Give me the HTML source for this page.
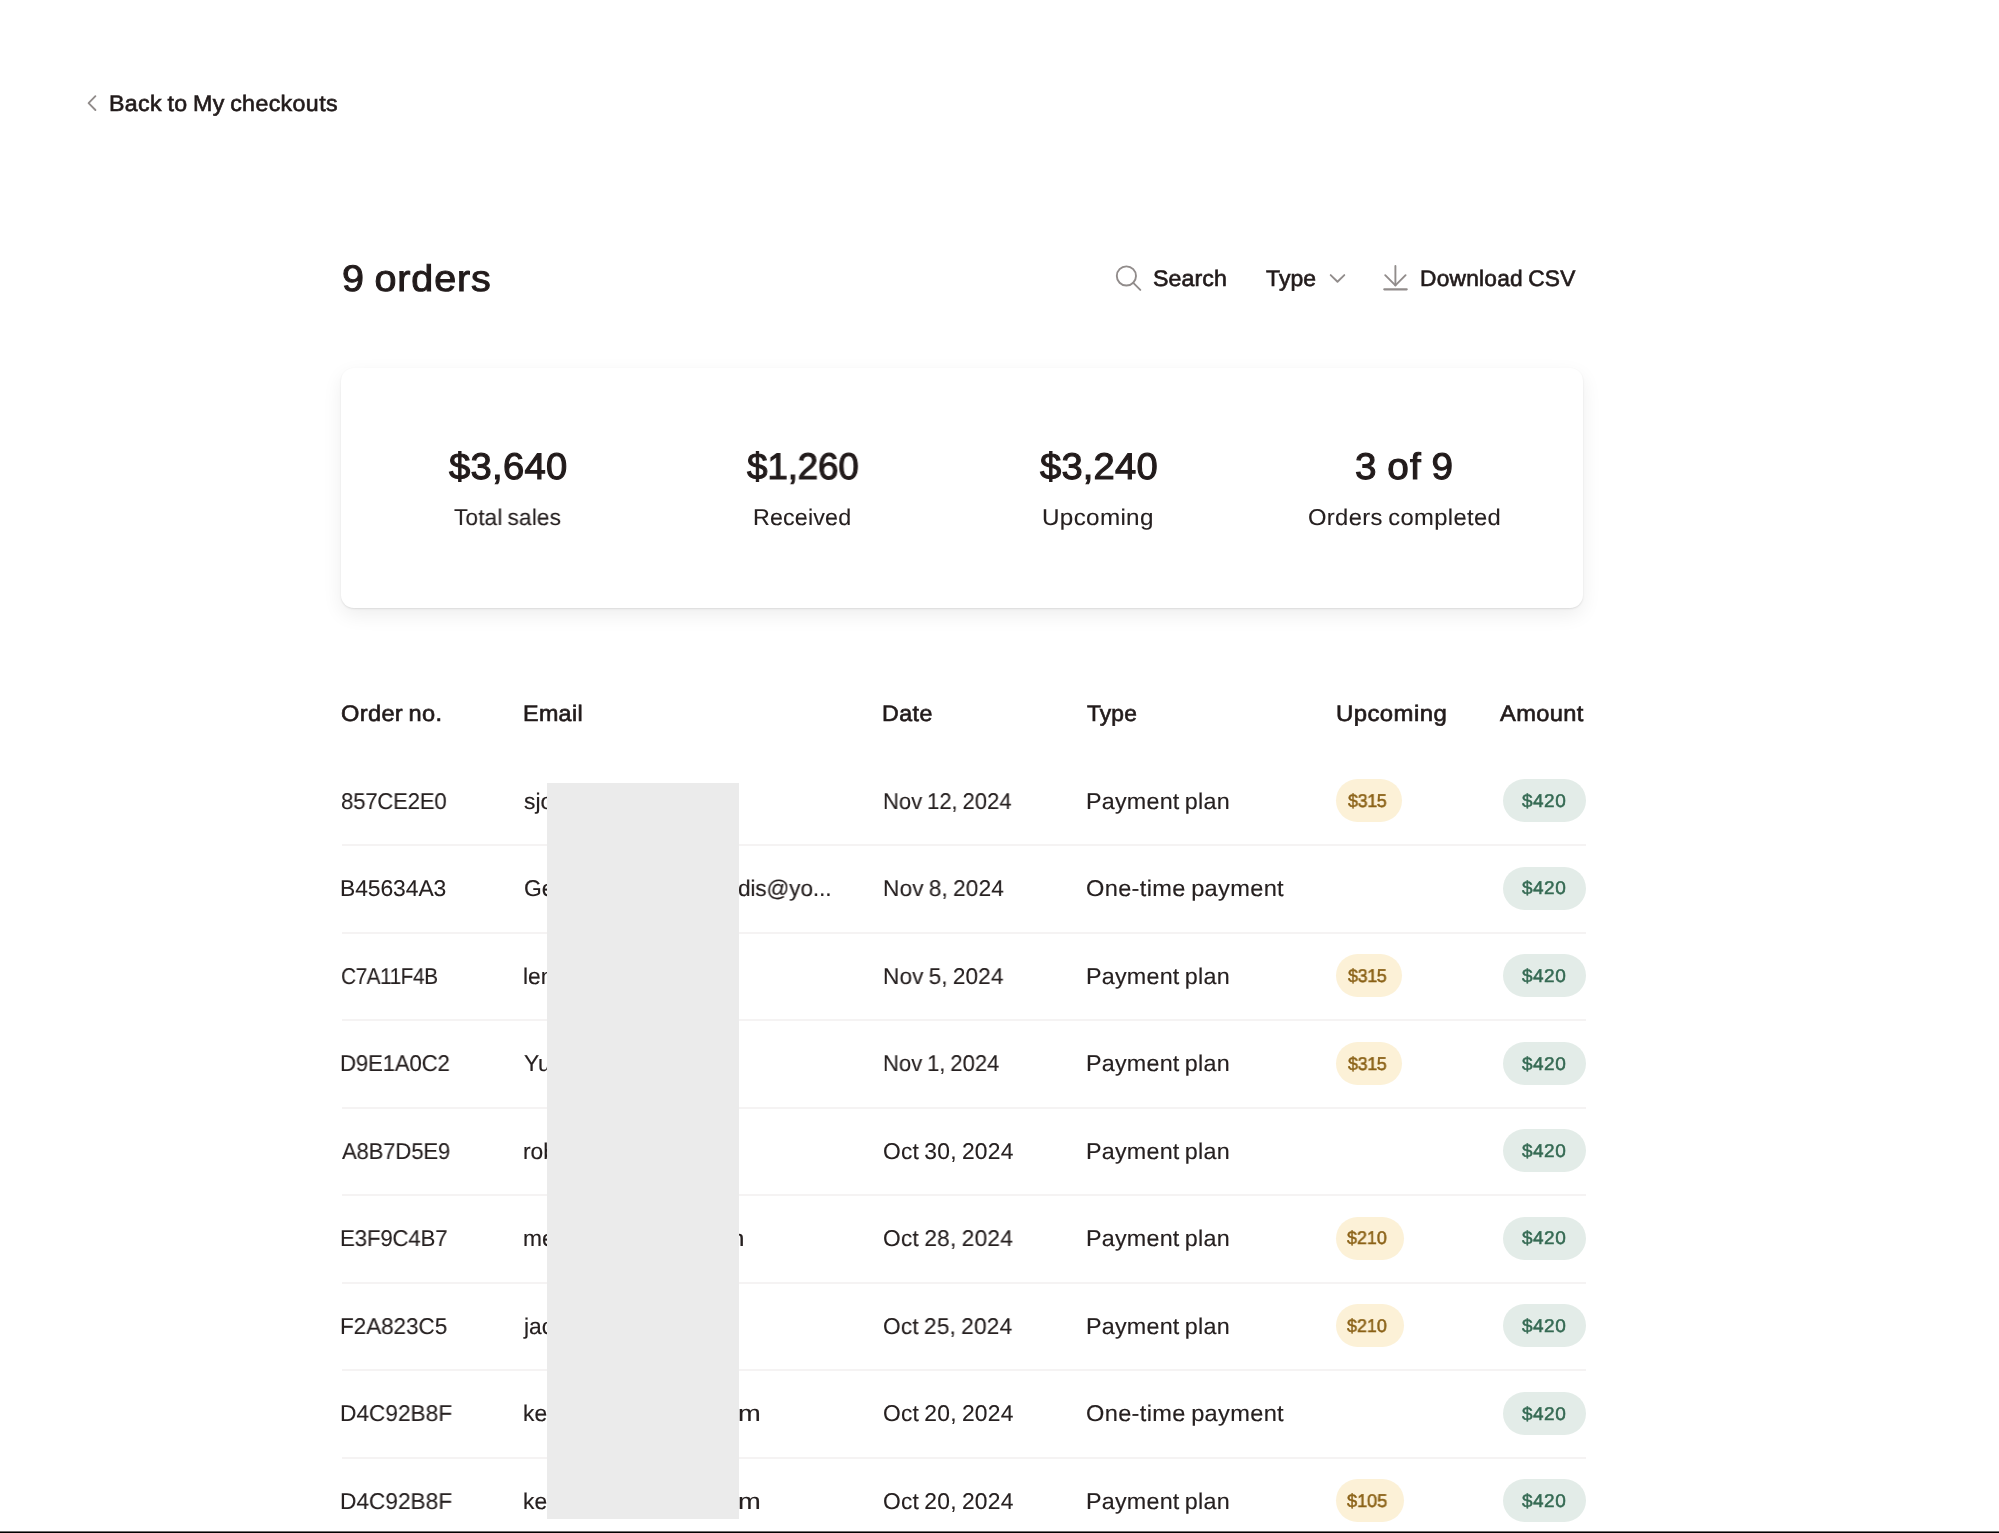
<!DOCTYPE html>
<html><head><meta charset="utf-8"><title>Orders</title>
<style>
html,body{margin:0;padding:0;background:#fff;}
html{width:1999px;height:1533px;overflow:hidden;}
body{width:1999px;height:1533px;position:relative;overflow:hidden;font-family:"Liberation Sans",sans-serif;}
.t{position:absolute;white-space:pre;line-height:1;transform-origin:0 50%;will-change:transform;text-rendering:geometricPrecision;word-spacing:-0.06em;}
.card{position:absolute;left:341px;top:368.4px;width:1242px;height:239.3px;border-radius:13px;background:#fff;
 box-shadow:0 1px 2px rgba(0,0,0,.10),0 7px 20px rgba(0,0,0,.07);}
.sep{position:absolute;left:341.5px;width:1244.5px;height:2px;background:#f5f3f3;}
.pill{position:absolute;height:43px;border-radius:22px;}
.redact{position:absolute;left:547.2px;top:782.9px;width:191.6px;height:735.8px;background:#ebebeb;}
.bline{position:absolute;left:0;top:1531px;width:1999px;height:2px;background:linear-gradient(#6e6e6e 0,#6e6e6e 50%,#000 50%,#000 100%);}
svg{position:absolute;overflow:visible;}
</style></head>
<body>
<div class="card"></div>
<div class="sep" style="top:844.40px"></div>
<div class="sep" style="top:931.90px"></div>
<div class="sep" style="top:1019.40px"></div>
<div class="sep" style="top:1106.90px"></div>
<div class="sep" style="top:1194.40px"></div>
<div class="sep" style="top:1281.90px"></div>
<div class="sep" style="top:1369.40px"></div>
<div class="sep" style="top:1456.90px"></div>
<div class="pill" style="left:1336.00px;top:779px;width:65.50px;background:#fcf1d7"></div>
<div class="pill" style="left:1503.20px;top:779px;width:82.80px;background:#e3ece8"></div>
<div class="pill" style="left:1503.20px;top:867px;width:82.80px;background:#e3ece8"></div>
<div class="pill" style="left:1336.00px;top:954px;width:65.50px;background:#fcf1d7"></div>
<div class="pill" style="left:1503.20px;top:954px;width:82.80px;background:#e3ece8"></div>
<div class="pill" style="left:1336.00px;top:1042px;width:65.50px;background:#fcf1d7"></div>
<div class="pill" style="left:1503.20px;top:1042px;width:82.80px;background:#e3ece8"></div>
<div class="pill" style="left:1503.20px;top:1129px;width:82.80px;background:#e3ece8"></div>
<div class="pill" style="left:1336.00px;top:1217px;width:67.50px;background:#fcf1d7"></div>
<div class="pill" style="left:1503.20px;top:1217px;width:82.80px;background:#e3ece8"></div>
<div class="pill" style="left:1336.00px;top:1304px;width:67.50px;background:#fcf1d7"></div>
<div class="pill" style="left:1503.20px;top:1304px;width:82.80px;background:#e3ece8"></div>
<div class="pill" style="left:1503.20px;top:1392px;width:82.80px;background:#e3ece8"></div>
<div class="pill" style="left:1336.00px;top:1479px;width:67.50px;background:#fcf1d7"></div>
<div class="pill" style="left:1503.20px;top:1479px;width:82.80px;background:#e3ece8"></div>
<div class="t" id="back" style="left:109.00px;top:93.00px;font-size:22.5px;color:#221b1b;letter-spacing:0.368px;transform:scaleX(1.0306);-webkit-text-stroke:0.65px #221b1b;">Back to My checkouts</div>
<div class="t" id="title" style="left:342.00px;top:260.00px;font-size:37px;color:#221b1b;letter-spacing:0.866px;transform:scaleX(1.0663);-webkit-text-stroke:1.0px #221b1b;">9 orders</div>
<div class="t" id="search" style="left:1153.00px;top:268.00px;font-size:22.5px;color:#221b1b;letter-spacing:0.075px;transform:scaleX(1.0294);-webkit-text-stroke:0.65px #221b1b;">Search</div>
<div class="t" id="type" style="left:1266.00px;top:268.00px;font-size:22.5px;color:#221b1b;letter-spacing:0.120px;transform:scaleX(1.0204);-webkit-text-stroke:0.65px #221b1b;">Type</div>
<div class="t" id="dl" style="left:1420.00px;top:268.00px;font-size:22.5px;color:#221b1b;letter-spacing:0.238px;transform:scaleX(1.0097);-webkit-text-stroke:0.65px #221b1b;">Download CSV</div>
<div class="t" id="v1" style="left:449.00px;top:448.00px;font-size:37px;color:#221b1b;letter-spacing:0.272px;transform:scaleX(1.0331);-webkit-text-stroke:1.1px #221b1b;">$3,640</div>
<div class="t" id="v2" style="left:747.00px;top:448.00px;font-size:37px;color:#221b1b;letter-spacing:-0.113px;transform:scaleX(0.9931);-webkit-text-stroke:1.1px #221b1b;">$1,260</div>
<div class="t" id="v3" style="left:1040.00px;top:448.00px;font-size:37px;color:#221b1b;letter-spacing:0.207px;transform:scaleX(1.0300);-webkit-text-stroke:1.1px #221b1b;">$3,240</div>
<div class="t" id="v4" style="left:1355.00px;top:448.00px;font-size:37px;color:#221b1b;letter-spacing:1.131px;transform:scaleX(1.0436);-webkit-text-stroke:1.1px #221b1b;">3 of 9</div>
<div class="t" id="l1" style="left:454.00px;top:506.00px;font-size:22.8px;color:#262020;letter-spacing:0.150px;transform:scaleX(0.9915);-webkit-text-stroke:0.1px #262020;">Total sales</div>
<div class="t" id="l2" style="left:753.00px;top:506.00px;font-size:22.8px;color:#262020;letter-spacing:0.142px;transform:scaleX(1.0213);-webkit-text-stroke:0.1px #262020;">Received</div>
<div class="t" id="l3" style="left:1042.00px;top:506.00px;font-size:22.8px;color:#262020;letter-spacing:0.301px;transform:scaleX(1.0636);-webkit-text-stroke:0.1px #262020;">Upcoming</div>
<div class="t" id="l4" style="left:1308.00px;top:506.00px;font-size:22.8px;color:#262020;letter-spacing:0.332px;transform:scaleX(1.0434);-webkit-text-stroke:0.1px #262020;">Orders completed</div>
<div class="t" id="h1" style="left:341.00px;top:703.00px;font-size:22.5px;color:#221b1b;letter-spacing:0.332px;transform:scaleX(1.0487);-webkit-text-stroke:0.65px #221b1b;">Order no.</div>
<div class="t" id="h2" style="left:523.00px;top:703.00px;font-size:22.5px;color:#221b1b;letter-spacing:0.333px;transform:scaleX(1.0350);-webkit-text-stroke:0.65px #221b1b;">Email</div>
<div class="t" id="h3" style="left:882.00px;top:703.00px;font-size:22.5px;color:#221b1b;letter-spacing:0.453px;transform:scaleX(1.0304);-webkit-text-stroke:0.65px #221b1b;">Date</div>
<div class="t" id="h4" style="left:1087.00px;top:703.00px;font-size:22.5px;color:#221b1b;letter-spacing:0.131px;transform:scaleX(1.0131);-webkit-text-stroke:0.65px #221b1b;">Type</div>
<div class="t" id="h5" style="left:1336.00px;top:703.00px;font-size:22.5px;color:#221b1b;letter-spacing:0.396px;transform:scaleX(1.0636);-webkit-text-stroke:0.65px #221b1b;">Upcoming</div>
<div class="t" id="h6" style="left:1500.00px;top:703.00px;font-size:22.5px;color:#221b1b;letter-spacing:0.352px;transform:scaleX(1.0512);-webkit-text-stroke:0.65px #221b1b;">Amount</div>
<div class="t" id="o0" style="left:341.00px;top:790.00px;font-size:22.8px;color:#262020;letter-spacing:-0.236px;transform:scaleX(0.9728);-webkit-text-stroke:0.1px #262020;">857CE2E0</div>
<div class="t" id="e0" style="left:524.00px;top:790.00px;font-size:22.8px;color:#262020;-webkit-text-stroke:0.15px #262020;">sjo</div>
<div class="t" id="d0" style="left:883.00px;top:790.00px;font-size:22.8px;color:#262020;letter-spacing:0.040px;transform:scaleX(0.9637);-webkit-text-stroke:0.1px #262020;">Nov 12, 2024</div>
<div class="t" id="t0" style="left:1086.00px;top:790.00px;font-size:22.8px;color:#262020;letter-spacing:0.225px;transform:scaleX(1.0221);-webkit-text-stroke:0.15px #262020;">Payment plan</div>
<div class="t" id="u0" style="left:1348.00px;top:792.00px;font-size:18.4px;color:#8a6116;letter-spacing:-0.282px;transform:scaleX(0.9667);-webkit-text-stroke:0.5px #8a6116;">$315</div>
<div class="t" id="a0" style="left:1522.00px;top:792.00px;font-size:18.4px;color:#356a53;letter-spacing:0.474px;transform:scaleX(1.0324);-webkit-text-stroke:0.5px #356a53;">$420</div>
<div class="t" id="o1" style="left:340.00px;top:877.00px;font-size:22.8px;color:#262020;letter-spacing:-0.070px;transform:scaleX(1.0027);-webkit-text-stroke:0.1px #262020;">B45634A3</div>
<div class="t" id="e1" style="left:524.00px;top:877.00px;font-size:22.8px;color:#262020;-webkit-text-stroke:0.15px #262020;">Ge</div>
<div class="t" id="f1" style="left:738.00px;top:877.00px;font-size:22.8px;color:#262020;letter-spacing:-0.103px;transform:scaleX(0.9886);-webkit-text-stroke:0.15px #262020;">dis@yo...</div>
<div class="t" id="d1" style="left:883.00px;top:877.00px;font-size:22.8px;color:#262020;letter-spacing:0.182px;transform:scaleX(0.9907);-webkit-text-stroke:0.1px #262020;">Nov 8, 2024</div>
<div class="t" id="t1" style="left:1086.00px;top:877.00px;font-size:22.8px;color:#262020;letter-spacing:0.318px;transform:scaleX(1.0352);-webkit-text-stroke:0.15px #262020;">One-time payment</div>
<div class="t" id="a1" style="left:1522.00px;top:879.00px;font-size:18.4px;color:#356a53;letter-spacing:0.474px;transform:scaleX(1.0324);-webkit-text-stroke:0.5px #356a53;">$420</div>
<div class="t" id="o2" style="left:341.00px;top:965.00px;font-size:22.8px;color:#262020;letter-spacing:-0.533px;transform:scaleX(0.9144);-webkit-text-stroke:0.1px #262020;">C7A11F4B</div>
<div class="t" id="e2" style="left:523.00px;top:965.00px;font-size:22.8px;color:#262020;-webkit-text-stroke:0.15px #262020;">len</div>
<div class="t" id="d2" style="left:883.00px;top:965.00px;font-size:22.8px;color:#262020;letter-spacing:0.165px;transform:scaleX(0.9878);-webkit-text-stroke:0.1px #262020;">Nov 5, 2024</div>
<div class="t" id="t2" style="left:1086.00px;top:965.00px;font-size:22.8px;color:#262020;letter-spacing:0.225px;transform:scaleX(1.0221);-webkit-text-stroke:0.15px #262020;">Payment plan</div>
<div class="t" id="u2" style="left:1348.00px;top:967.00px;font-size:18.4px;color:#8a6116;letter-spacing:-0.282px;transform:scaleX(0.9667);-webkit-text-stroke:0.5px #8a6116;">$315</div>
<div class="t" id="a2" style="left:1522.00px;top:967.00px;font-size:18.4px;color:#356a53;letter-spacing:0.474px;transform:scaleX(1.0324);-webkit-text-stroke:0.5px #356a53;">$420</div>
<div class="t" id="o3" style="left:340.00px;top:1052.00px;font-size:22.8px;color:#262020;letter-spacing:-0.185px;transform:scaleX(0.9748);-webkit-text-stroke:0.1px #262020;">D9E1A0C2</div>
<div class="t" id="e3" style="left:524.00px;top:1052.00px;font-size:22.8px;color:#262020;-webkit-text-stroke:0.15px #262020;">Yu</div>
<div class="t" id="d3" style="left:883.00px;top:1052.00px;font-size:22.8px;color:#262020;letter-spacing:0.034px;transform:scaleX(0.9650);-webkit-text-stroke:0.1px #262020;">Nov 1, 2024</div>
<div class="t" id="t3" style="left:1086.00px;top:1052.00px;font-size:22.8px;color:#262020;letter-spacing:0.225px;transform:scaleX(1.0221);-webkit-text-stroke:0.15px #262020;">Payment plan</div>
<div class="t" id="u3" style="left:1348.00px;top:1055.00px;font-size:18.4px;color:#8a6116;letter-spacing:-0.282px;transform:scaleX(0.9667);-webkit-text-stroke:0.5px #8a6116;">$315</div>
<div class="t" id="a3" style="left:1522.00px;top:1055.00px;font-size:18.4px;color:#356a53;letter-spacing:0.474px;transform:scaleX(1.0324);-webkit-text-stroke:0.5px #356a53;">$420</div>
<div class="t" id="o4" style="left:342.00px;top:1140.00px;font-size:22.8px;color:#262020;letter-spacing:-0.165px;transform:scaleX(0.9688);-webkit-text-stroke:0.1px #262020;">A8B7D5E9</div>
<div class="t" id="e4" style="left:523.00px;top:1140.00px;font-size:22.8px;color:#262020;-webkit-text-stroke:0.15px #262020;">rob</div>
<div class="t" id="d4" style="left:883.00px;top:1140.00px;font-size:22.8px;color:#262020;letter-spacing:0.228px;transform:scaleX(0.9984);-webkit-text-stroke:0.1px #262020;">Oct 30, 2024</div>
<div class="t" id="t4" style="left:1086.00px;top:1140.00px;font-size:22.8px;color:#262020;letter-spacing:0.225px;transform:scaleX(1.0221);-webkit-text-stroke:0.15px #262020;">Payment plan</div>
<div class="t" id="a4" style="left:1522.00px;top:1142.00px;font-size:18.4px;color:#356a53;letter-spacing:0.474px;transform:scaleX(1.0324);-webkit-text-stroke:0.5px #356a53;">$420</div>
<div class="t" id="o5" style="left:340.00px;top:1227.00px;font-size:22.8px;color:#262020;letter-spacing:-0.226px;transform:scaleX(0.9786);-webkit-text-stroke:0.1px #262020;">E3F9C4B7</div>
<div class="t" id="e5" style="left:523.00px;top:1227.00px;font-size:22.8px;color:#262020;-webkit-text-stroke:0.15px #262020;">me</div>
<div class="t" id="f5" style="left:723.00px;top:1227.00px;font-size:22.8px;color:#262020;transform:scaleX(1.1343);-webkit-text-stroke:0.15px #262020;">m</div>
<div class="t" id="d5" style="left:883.00px;top:1227.00px;font-size:22.8px;color:#262020;letter-spacing:0.237px;transform:scaleX(0.9957);-webkit-text-stroke:0.1px #262020;">Oct 28, 2024</div>
<div class="t" id="t5" style="left:1086.00px;top:1227.00px;font-size:22.8px;color:#262020;letter-spacing:0.225px;transform:scaleX(1.0221);-webkit-text-stroke:0.15px #262020;">Payment plan</div>
<div class="t" id="u5" style="left:1347.00px;top:1229.00px;font-size:18.4px;color:#8a6116;letter-spacing:0.021px;transform:scaleX(0.9710);-webkit-text-stroke:0.5px #8a6116;">$210</div>
<div class="t" id="a5" style="left:1522.00px;top:1229.00px;font-size:18.4px;color:#356a53;letter-spacing:0.474px;transform:scaleX(1.0324);-webkit-text-stroke:0.5px #356a53;">$420</div>
<div class="t" id="o6" style="left:340.00px;top:1315.00px;font-size:22.8px;color:#262020;letter-spacing:-0.093px;transform:scaleX(0.9894);-webkit-text-stroke:0.1px #262020;">F2A823C5</div>
<div class="t" id="e6" style="left:524.00px;top:1315.00px;font-size:22.8px;color:#262020;-webkit-text-stroke:0.15px #262020;">jac</div>
<div class="t" id="d6" style="left:883.00px;top:1315.00px;font-size:22.8px;color:#262020;letter-spacing:0.217px;transform:scaleX(0.9924);-webkit-text-stroke:0.1px #262020;">Oct 25, 2024</div>
<div class="t" id="t6" style="left:1086.00px;top:1315.00px;font-size:22.8px;color:#262020;letter-spacing:0.225px;transform:scaleX(1.0221);-webkit-text-stroke:0.15px #262020;">Payment plan</div>
<div class="t" id="u6" style="left:1347.00px;top:1317.00px;font-size:18.4px;color:#8a6116;letter-spacing:0.021px;transform:scaleX(0.9710);-webkit-text-stroke:0.5px #8a6116;">$210</div>
<div class="t" id="a6" style="left:1522.00px;top:1317.00px;font-size:18.4px;color:#356a53;letter-spacing:0.474px;transform:scaleX(1.0324);-webkit-text-stroke:0.5px #356a53;">$420</div>
<div class="t" id="o7" style="left:340.00px;top:1402.00px;font-size:22.8px;color:#262020;letter-spacing:-0.027px;transform:scaleX(0.9955);-webkit-text-stroke:0.1px #262020;">D4C92B8F</div>
<div class="t" id="e7" style="left:523.00px;top:1402.00px;font-size:22.8px;color:#262020;-webkit-text-stroke:0.15px #262020;">ke</div>
<div class="t" id="f7" style="left:738.00px;top:1402.00px;font-size:22.8px;color:#262020;transform:scaleX(1.1978);-webkit-text-stroke:0.15px #262020;">m</div>
<div class="t" id="d7" style="left:883.00px;top:1402.00px;font-size:22.8px;color:#262020;letter-spacing:0.228px;transform:scaleX(0.9984);-webkit-text-stroke:0.1px #262020;">Oct 20, 2024</div>
<div class="t" id="t7" style="left:1086.00px;top:1402.00px;font-size:22.8px;color:#262020;letter-spacing:0.318px;transform:scaleX(1.0352);-webkit-text-stroke:0.15px #262020;">One-time payment</div>
<div class="t" id="a7" style="left:1522.00px;top:1405.00px;font-size:18.4px;color:#356a53;letter-spacing:0.474px;transform:scaleX(1.0324);-webkit-text-stroke:0.5px #356a53;">$420</div>
<div class="t" id="o8" style="left:340.00px;top:1490.00px;font-size:22.8px;color:#262020;letter-spacing:-0.027px;transform:scaleX(0.9955);-webkit-text-stroke:0.1px #262020;">D4C92B8F</div>
<div class="t" id="e8" style="left:523.00px;top:1490.00px;font-size:22.8px;color:#262020;-webkit-text-stroke:0.15px #262020;">ke</div>
<div class="t" id="f8" style="left:738.00px;top:1490.00px;font-size:22.8px;color:#262020;transform:scaleX(1.1978);-webkit-text-stroke:0.15px #262020;">m</div>
<div class="t" id="d8" style="left:883.00px;top:1490.00px;font-size:22.8px;color:#262020;letter-spacing:0.228px;transform:scaleX(0.9984);-webkit-text-stroke:0.1px #262020;">Oct 20, 2024</div>
<div class="t" id="t8" style="left:1086.00px;top:1490.00px;font-size:22.8px;color:#262020;letter-spacing:0.225px;transform:scaleX(1.0221);-webkit-text-stroke:0.15px #262020;">Payment plan</div>
<div class="t" id="u8" style="left:1347.00px;top:1492.00px;font-size:18.4px;color:#8a6116;letter-spacing:-0.098px;transform:scaleX(0.9878);-webkit-text-stroke:0.5px #8a6116;">$105</div>
<div class="t" id="a8" style="left:1522.00px;top:1492.00px;font-size:18.4px;color:#356a53;letter-spacing:0.474px;transform:scaleX(1.0324);-webkit-text-stroke:0.5px #356a53;">$420</div>
<div class="redact"></div>

<svg width="1999" height="1533" viewBox="0 0 1999 1533" style="left:0;top:0" fill="none" stroke="#918c8b" stroke-width="1.9" stroke-linecap="round" stroke-linejoin="round">
 <path d="M95.4 96.2 L88.6 103.1 L95.4 110.0"/>
 <circle cx="1126.4" cy="275.95" r="9.6"/>
 <path d="M1133.3 282.9 L1140.3 289.9"/>
 <path d="M1330.7 275.1 L1337.5 281.7 L1344.3 275.1"/>
 <path d="M1395.4 266.0 L1395.4 285.4"/>
 <path d="M1385.2 275.2 L1395.4 285.4 L1405.6 275.2"/>
 <path d="M1384.3 289.3 L1406.7 289.3" stroke-width="2.2"/>
</svg>
<div class="bline"></div>
</body></html>
